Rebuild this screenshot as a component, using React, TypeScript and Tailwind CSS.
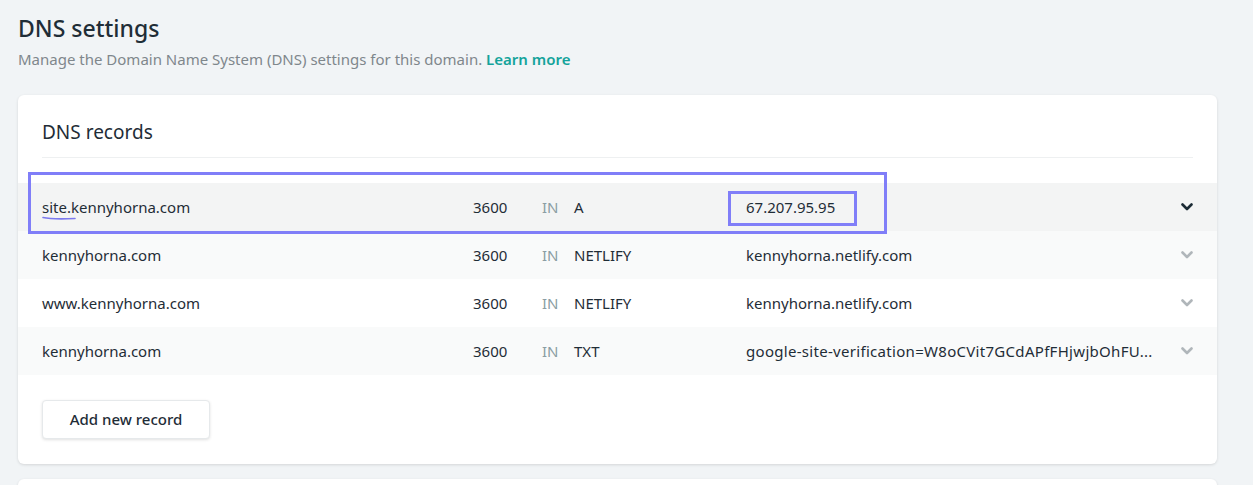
import React from "react";

const rows = [
  { name: "site.kennyhorna.com", ttl: "3600", type: "A", value: "67.207.95.95", bg: "bg-[#f3f4f4]", active: true, wide: false },
  { name: "kennyhorna.com", ttl: "3600", type: "NETLIFY", value: "kennyhorna.netlify.com", bg: "bg-[#f9fafa]", active: false, wide: false },
  { name: "www.kennyhorna.com", ttl: "3600", type: "NETLIFY", value: "kennyhorna.netlify.com", bg: "bg-white", active: false, wide: false },
  { name: "kennyhorna.com", ttl: "3600", type: "TXT", value: "google-site-verification=W8oCVit7GCdAPfFHjwjbOhFU...", bg: "bg-[#f9fafa]", active: false, wide: true },
];

function Chevron({ dark }: { dark: boolean }) {
  return (
    <svg width="12" height="8" viewBox="0 0 12 8" className="block">
      <path d="M1.5 1.5 L6 6 L10.5 1.5" fill="none" stroke={dark ? "#1b2b35" : "#b0b6ba"} strokeWidth="2.6" strokeLinecap="round" strokeLinejoin="round" />
    </svg>
  );
}

export default function App() {
  return (
    <div className="w-[1253px] h-[485px] overflow-hidden bg-[#f1f4f6] relative" style={{ fontFamily: '"Noto Sans", "Open Sans", sans-serif' }}>
      <div className="pl-[18px] pr-[36px] pt-[12px]">
        <h1 className="text-[23px] leading-[33px] font-medium text-[#1f2d37]">DNS settings</h1>
        <p className="text-[15px] leading-[22px] text-[#7f878c] mt-[3px]">
          Manage the Domain Name System (DNS) settings for this domain.{" "}
          <span className="font-semibold text-[#14a39b]">Learn more</span>
        </p>
        <div className="mt-[25px] bg-white rounded-[6px] shadow-[0_1px_3px_rgba(0,0,0,0.12)] relative">
          <div className="px-[24px] pt-[24px]">
            <h2 className="text-[19px] leading-[26px] text-[#1f2d37]">DNS records</h2>
            <div className="mt-[12px] h-px bg-[#eef0f1]" />
          </div>
          <div className="mt-[25px]">
            {rows.map((r, i) => (
              <div key={i} className={`flex items-center h-[48px] px-[24px] text-[15px] text-[#1f2d37] ${r.bg}`}>
                <div className="w-[431px] shrink-0 relative">
                  {r.name}
                  {r.active && (
                    <svg className="absolute left-0 top-[19px]" width="36" height="6" viewBox="0 0 36 6">
                      <path d="M1 2.5 Q 10 4.5 33 3.5" fill="none" stroke="#7b79ee" strokeWidth="1.6" strokeLinecap="round" />
                    </svg>
                  )}
                </div>
                <div className="w-[69px] shrink-0">{r.ttl}</div>
                <div className="w-[32px] shrink-0 text-[#8a9da3]">IN</div>
                <div className="w-[172px] shrink-0">{r.type}</div>
                <div className={`flex-1 whitespace-nowrap ${r.wide ? "tracking-[0.3px]" : ""}`}>{r.value}</div>
                <div className="w-[26px] shrink-0 flex justify-end">
                  <Chevron dark={r.active} />
                </div>
              </div>
            ))}
          </div>
          <div className="px-[24px] pt-[25px] pb-[25px]">
            <button className="h-[39px] w-[168px] rounded-[4px] bg-white border border-[#e6e9eb] shadow-[0_1px_3px_rgba(0,0,0,0.12)] text-[15px] font-medium text-[#1f2d37]">
              Add new record
            </button>
          </div>
          <div className="absolute left-[10px] top-[77px] w-[859px] h-[62px] border-[3px] border-[#807ef8] pointer-events-none" />
          <div className="absolute left-[710px] top-[96px] w-[129px] h-[35px] border-[3px] border-[#807ef8] pointer-events-none" />
        </div>
        <div className="mt-[15px] h-[40px] bg-white rounded-[6px] shadow-[0_1px_3px_rgba(0,0,0,0.12)]" />
      </div>
    </div>
  );
}
